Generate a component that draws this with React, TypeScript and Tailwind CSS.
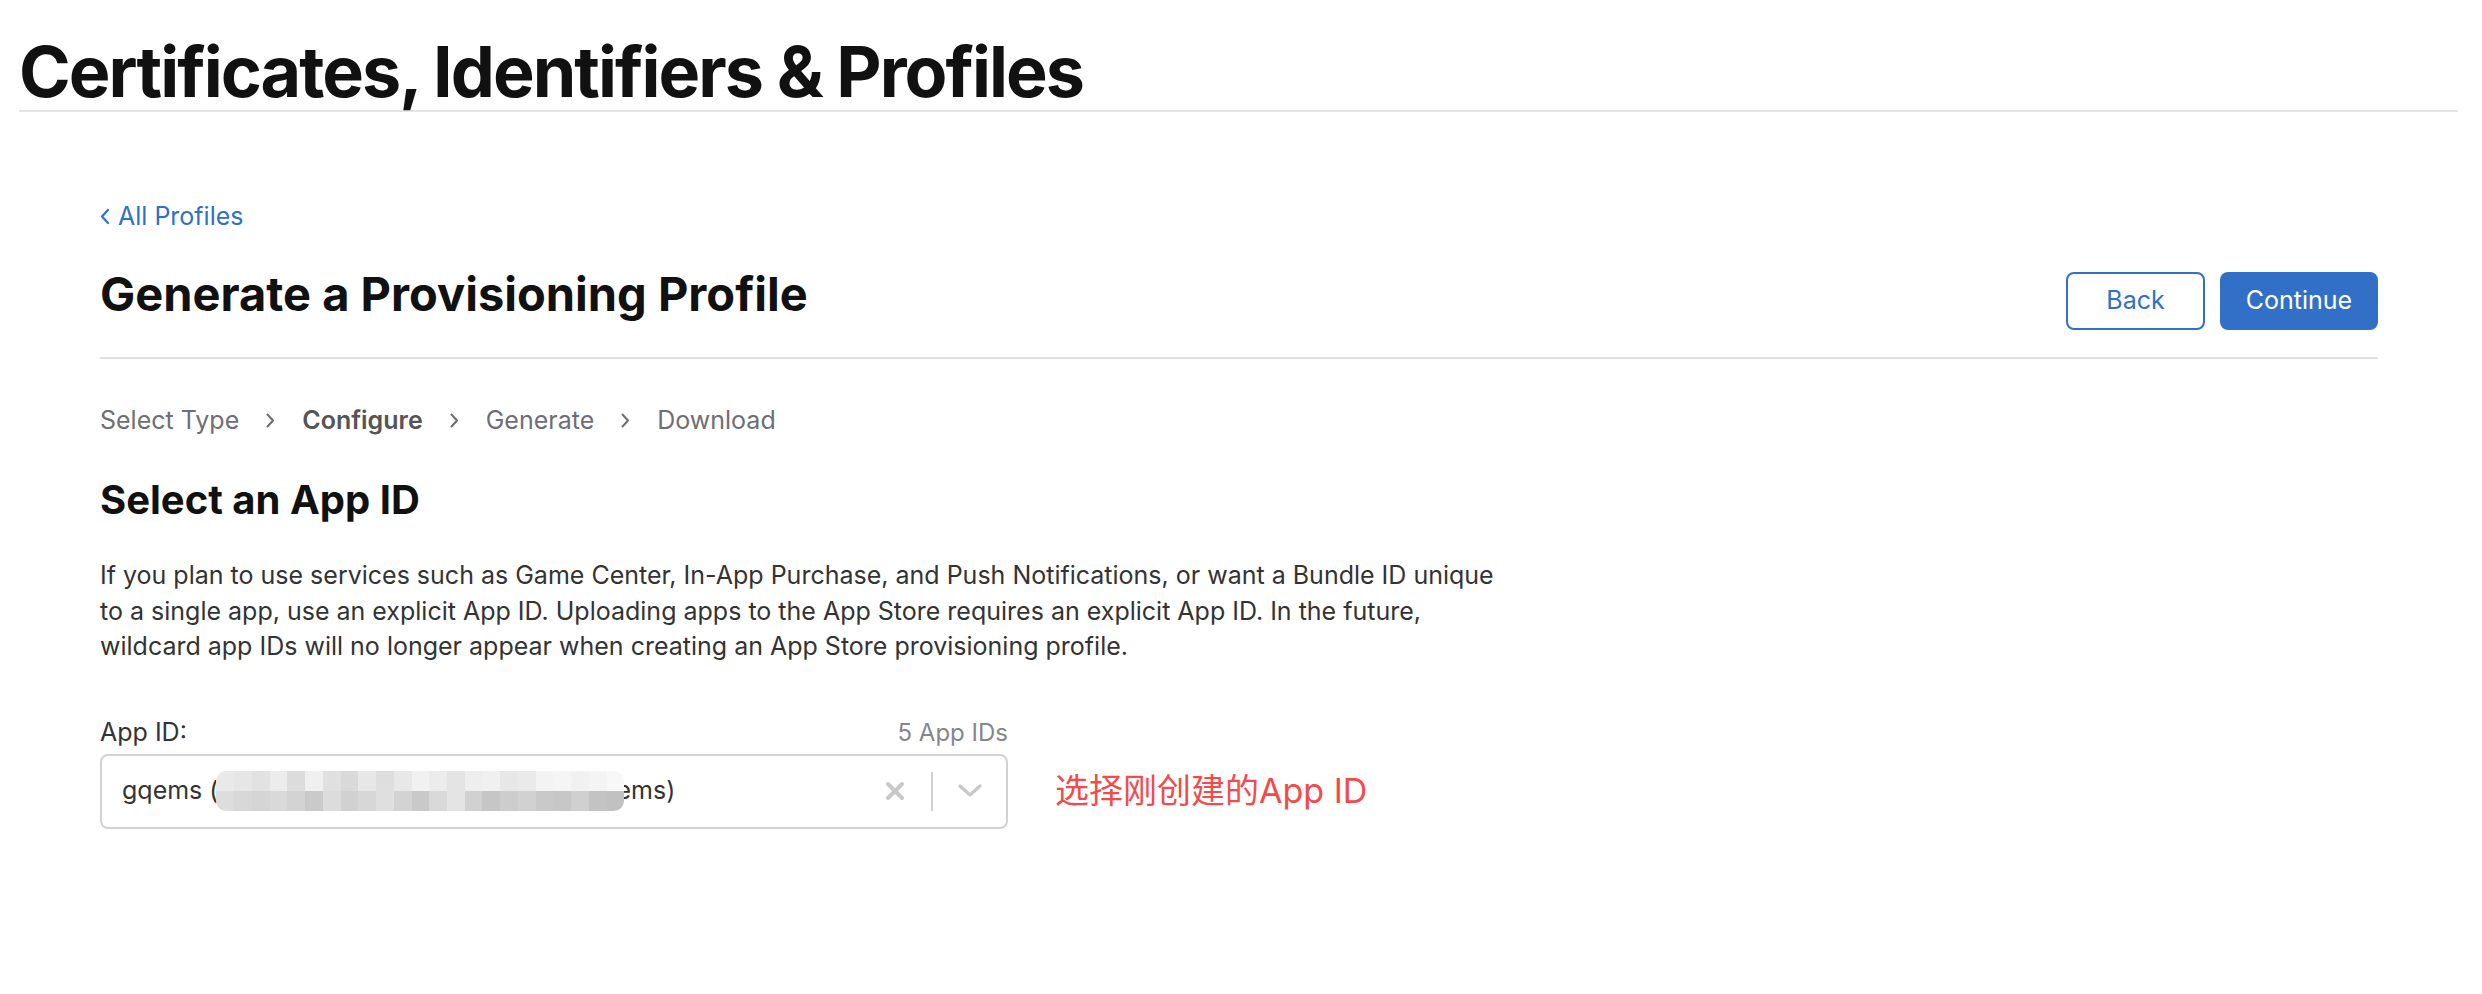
import React from 'react';

const topRow = ['#e9e9e9', '#e6e6e6', '#e2e2e2', '#ececec', '#dcdcdc', '#f0f0f0', '#e0e0e0', '#d9d9d9', '#e7e7e7', '#dedede', '#e8e8e8', '#f1f1f1', '#ececec', '#e4e4e4', '#eeeeee', '#f0f0f0', '#e7e7e7', '#eaeaea', '#f3f3f3', '#f5f5f5', '#f1f1f1', '#f4f4f4', '#f8f8f8'];
const bottomRow = ['#dddddd', '#d8d8d8', '#d5d5d5', '#d9d9d9', '#d3d3d3', '#cacaca', '#dcdcdc', '#d1d1d1', '#d7d7d7', '#dfdfdf', '#d3d3d3', '#c9c9c9', '#d9d9d9', '#e4e4e4', '#d1d1d1', '#c6c6c6', '#cdcdcd', '#d1d1d1', '#c9c9c9', '#c7c7c7', '#d0d0d0', '#c3c3c3', '#c1c1c1'];

const Mosaic = () => (
  <div className="relative z-10 flex flex-col w-[408px] h-[40px] rounded-[10px] overflow-hidden -ml-[2px]">
    {[topRow, bottomRow].map((row, r) => (
      <div key={r} className="flex flex-1">
        {row.map((c, i) => (
          <div key={i} className="flex-1" style={{ backgroundColor: c }} />
        ))}
      </div>
    ))}
  </div>
);

const StepChevron = () => (
  <svg width="9" height="15" viewBox="0 0 9 15" fill="none" className="shrink-0">
    <path d="M1.5 1.5 L7 7.5 L1.5 13.5" stroke="#6e6e73" strokeWidth="2" strokeLinecap="round" strokeLinejoin="round" />
  </svg>
);

export default function App() {
  return (
    <div className="min-h-screen bg-white text-[#1d1d1f]" style={{ fontFamily: 'Inter, "Noto Sans CJK SC", sans-serif' }}>
      {/* top header */}
      <div className="ml-[19px] mr-[24px] pt-[37px] pb-[3px] border-b-2 border-[#e5e5e5]">
        <h1 className="text-[70px] leading-none font-bold tracking-[-0.028em] text-[#111]">
          Certificates, Identifiers &amp; Profiles
        </h1>
      </div>

      <div className="pl-[100px] pr-[104px]">
        <a className="mt-[92px] flex items-center gap-[8px] text-[25px] leading-none text-[#3070c6]">
          <svg width="10" height="17" viewBox="0 0 10 17" fill="none">
            <path d="M8 2 L2 8.5 L8 15" stroke="#3070c6" strokeWidth="2.2" strokeLinecap="round" strokeLinejoin="round" />
          </svg>
          All Profiles
        </a>

        <div className="mt-[41px] flex items-start justify-between pb-[27px] border-b-2 border-[#e0e0e0]">
          <h2 className="text-[47px] leading-none font-bold text-[#111]">
            Generate a Provisioning Profile
          </h2>
          <div className="mt-[2px] flex gap-[15px]">
            <button className="w-[139px] h-[58px] rounded-[8px] border-2 border-[#3170c6] text-[25px] text-[#3170c6]">
              Back
            </button>
            <button className="w-[158px] h-[58px] rounded-[8px] bg-[#3170c6] text-[25px] text-white">
              Continue
            </button>
          </div>
        </div>

        <div className="mt-[49px] flex items-center gap-[27px] text-[25px] leading-none text-[#6e6e73]">
          <span>Select Type</span>
          <StepChevron />
          <span className="font-semibold text-[#555]">Configure</span>
          <StepChevron />
          <span>Generate</span>
          <StepChevron />
          <span>Download</span>
        </div>

        <h3 className="mt-[47px] text-[40px] leading-none font-bold text-[#111]">Select an App ID</h3>

        <p className="mt-[38px] w-[1420px] text-[25px] leading-[35.5px] text-[#333]">
          If you plan to use services such as Game Center, In-App Purchase, and Push Notifications, or want a Bundle ID unique
          to a single app, use an explicit App ID. Uploading apps to the App Store requires an explicit App ID. In the future,
          wildcard app IDs will no longer appear when creating an App Store provisioning profile.
        </p>

        <div className="mt-[55px] w-[908px] flex items-end justify-between leading-none">
          <span className="text-[25px] text-[#333]">App ID:</span>
          <span className="text-[24px] text-[#86868b]">5 App IDs</span>
        </div>

        <div className="mt-[9px] flex items-center gap-[47px]">
          <div className="w-[908px] h-[75px] rounded-[8px] border-2 border-[#d2d2d2] flex items-center pl-[20px] pr-[23px]">
            <div className="flex-1 flex items-center text-[25px] text-[#333]">
              <span>gqems (</span>
              <Mosaic />
              <span className="-ml-[8px]">ems)</span>
            </div>
            <svg width="20" height="20" viewBox="0 0 20 20" className="shrink-0">
              <path d="M3 3 L17 17 M17 3 L3 17" stroke="#c8c8c8" strokeWidth="4" strokeLinecap="round" />
            </svg>
            <div className="ml-[26px] w-[2px] h-[39px] bg-[#d0d0d0]" />
            <svg width="26" height="16" viewBox="0 0 26 16" className="ml-[24px] shrink-0">
              <path d="M3 3 L13 12 L23 3" stroke="#c8c8c8" strokeWidth="3.2" fill="none" strokeLinecap="round" strokeLinejoin="round" />
            </svg>
          </div>
          <span className="text-[34px] leading-none text-[#f44a4c]">选择刚创建的App ID</span>
        </div>
      </div>
    </div>
  );
}
